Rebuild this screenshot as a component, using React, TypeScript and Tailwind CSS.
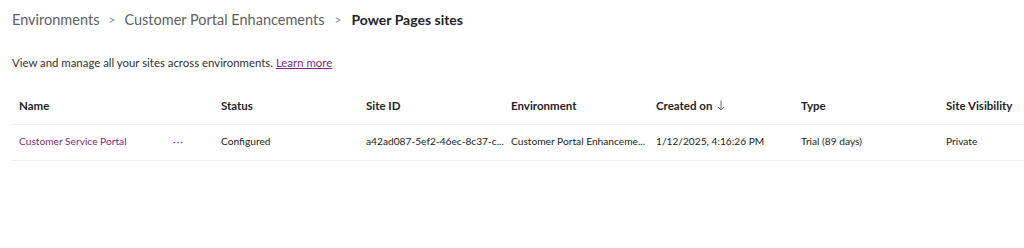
import React from 'react';

const columns = ['Name', 'Status', 'Site ID', 'Environment', 'Created on', 'Type', 'Site Visibility'];

const row = {
  status: 'Configured',
  siteId: 'a42ad087-5ef2-46ec-8c37-c...',
  environment: 'Customer Portal Enhanceme...',
  createdOn: '1/12/2025, 4:16:26 PM',
  type: 'Trial (89 days)',
  visibility: 'Private',
};

const SortDown = () => (
  <svg width="8" height="11" viewBox="0 0 8 11" className="ml-[5px] inline-block align-[-1px]">
    <path d="M4 0.5V10M0.8 6.8L4 10L7.2 6.8" fill="none" stroke="#6b6b6b" strokeWidth="1" />
  </svg>
);

export default function App() {
  return (
    <div className="h-[248px] w-[1024px] overflow-hidden bg-white" style={{ fontFamily: 'Lato, "Open Sans", sans-serif' }}>
      <nav className="flex items-center pl-3 pt-[9px] text-[14.5px] leading-[22px] text-[#616161]">
        <span>Environments</span>
        <span className="mx-[9px] text-[12px] text-[#8a8a8a]">&gt;</span>
        <span>Customer Portal Enhancements</span>
        <span className="mx-[10px] text-[12px] text-[#8a8a8a]">&gt;</span>
        <span className="text-[14px] font-bold text-[#242424]">Power Pages sites</span>
      </nav>

      <p className="mt-[24px] pl-3 text-[11.4px] leading-4 text-[#323130]">
        View and manage all your sites across environments.{' '}
        <a className="text-[#7a2d7a] underline">Learn more</a>
      </p>

      <table className="ml-[11px] mt-[17px] w-[1013px] table-fixed border-collapse text-left">
        <colgroup>
          <col className="w-[202px]" />
          <col className="w-[145px]" />
          <col className="w-[145px]" />
          <col className="w-[145px]" />
          <col className="w-[145px]" />
          <col className="w-[145px]" />
          <col className="w-[86px]" />
        </colgroup>
        <thead>
          <tr className="h-[36px] border-b border-[#f0f0f0]">
            {columns.map((c) => (
              <th key={c} className="whitespace-nowrap px-2 text-[11.5px] font-bold text-[#242424]">
                {c}
                {c === 'Created on' && <SortDown />}
              </th>
            ))}
          </tr>
        </thead>
        <tbody>
          <tr className="h-[36px] border-b border-[#f0f0f0] text-[10.2px] text-[#242424]">
            <td className="px-2">
              <div className="flex items-center justify-between">
                <span className="text-[#7a2d7a]">Customer Service Portal</span>
                <span className="mr-[21px] tracking-[1px] text-[#7a2d7a]">···</span>
              </div>
            </td>
            <td className="whitespace-nowrap px-2">{row.status}</td>
            <td className="whitespace-nowrap px-2">{row.siteId}</td>
            <td className="whitespace-nowrap px-2">{row.environment}</td>
            <td className="whitespace-nowrap px-2">{row.createdOn}</td>
            <td className="whitespace-nowrap px-2">{row.type}</td>
            <td className="whitespace-nowrap px-2">{row.visibility}</td>
          </tr>
        </tbody>
      </table>
    </div>
  );
}
